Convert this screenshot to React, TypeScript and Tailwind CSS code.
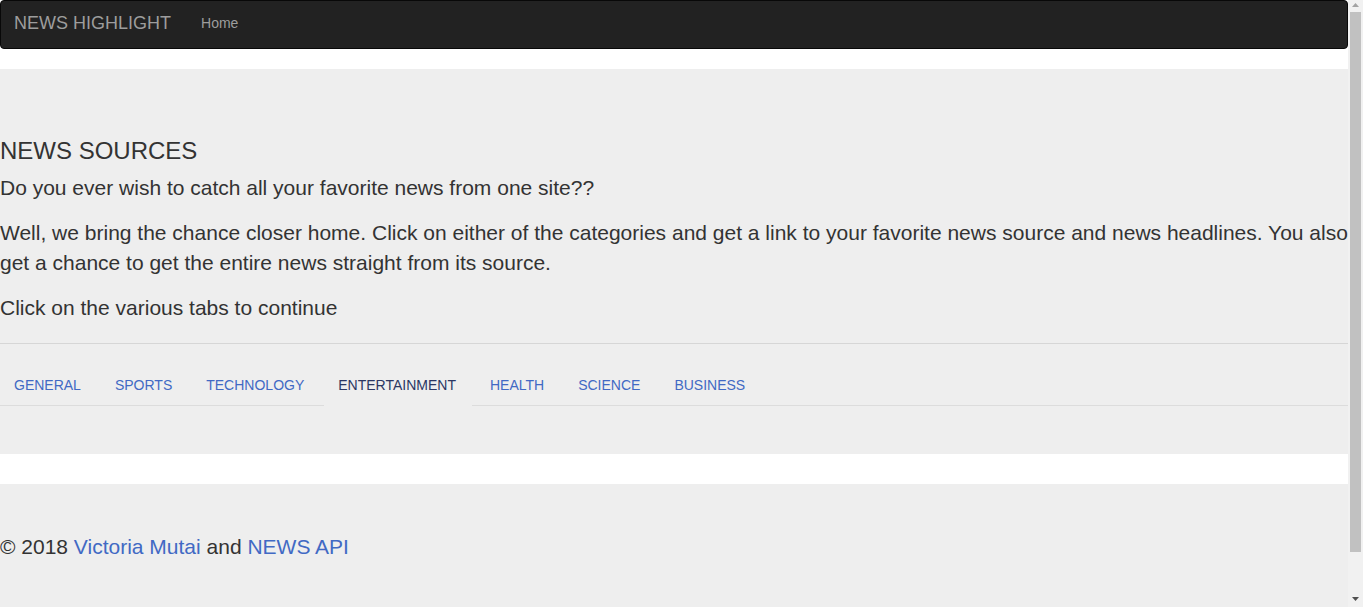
import React from "react";

const tabs = ["GENERAL", "SPORTS", "TECHNOLOGY", "ENTERTAINMENT", "HEALTH", "SCIENCE", "BUSINESS"];

export default function App() {
  return (
    <div className="flex h-[607px] w-[1363px] overflow-hidden bg-white font-['Liberation_Sans',_Arial,_sans-serif] text-[#333]">
      <div className="flex w-[1348px] shrink-0 flex-col">
        {/* Navbar */}
        <nav className="mb-[20px] flex h-[49px] shrink-0 items-start rounded-[4px] border border-[#080808] bg-[#222]">
          <a className="block pl-[13px] pr-[15px] pt-[12px] text-[18px] leading-[20px] text-[#9d9d9d]">NEWS HIGHLIGHT</a>
          <a className="block px-[15px] pt-[12px] text-[14px] leading-[20px] text-[#9d9d9d]">Home</a>
        </nav>

        {/* Jumbotron */}
        <section className="shrink-0 bg-[#eee] pt-[48px] pb-[48px]">
          <h3 className="mt-[21px] text-[24px] leading-[26px]">NEWS SOURCES</h3>
          <p className="mt-[9px] text-[21px] leading-[30px]">Do you ever wish to catch all your favorite news from one site??</p>
          <p className="mt-[15px] text-[21px] leading-[30px]">
            Well, we bring the chance closer home. Click on either of the categories and get a link to your favorite news source and news headlines. You also get a chance to get the entire news straight from its source.
          </p>
          <p className="mt-[15px] text-[21px] leading-[30px]">Click on the various tabs to continue</p>
          <hr className="mt-[20px] mb-[20px] border-0 border-t border-t-[#d6d6d6]" />
          <ul className="flex gap-[4px] border-b border-b-[#dcdcdc]">
            {tabs.map((t) => {
              const active = t === "ENTERTAINMENT";
              return (
                <li key={t} className="-mb-px">
                  <a
                    className={
                      active
                        ? "block border-y border-y-transparent border-b-[#eee] pl-[14px] pr-[16px] py-[10px] text-[14px] leading-[20px] text-[#2b3763]"
                        : "block border-y border-y-transparent pl-[14px] pr-[16px] py-[10px] text-[14px] leading-[20px] text-[#4169c4]"
                    }
                  >
                    {t}
                  </a>
                </li>
              );
            })}
          </ul>
        </section>

        <div className="h-[30px] shrink-0" />

        {/* Footer */}
        <footer className="shrink-0 bg-[#eee] pt-[48px] pb-[48px]">
          <p className="text-[21px] leading-[30px]">
            © 2018 <a className="text-[#4169c4]">Victoria Mutai</a> and <a className="text-[#4169c4]">NEWS API</a>
          </p>
        </footer>
      </div>

      {/* Scrollbar */}
      <div className="flex w-[15px] shrink-0 flex-col items-center bg-[#f1f1f1]">
        <svg width="7" height="4" viewBox="0 0 7 4" className="mt-[3px] shrink-0">
          <polygon points="3.5,0 7,4 0,4" fill="#a3a3a3" />
        </svg>
        <div className="mt-[5px] h-[540px] w-[11px] shrink-0 bg-[#c1c1c1]" />
        <div className="flex-1" />
        <svg width="7" height="4" viewBox="0 0 7 4" className="mb-[6px] shrink-0">
          <polygon points="0,0 7,0 3.5,4" fill="#505050" />
        </svg>
      </div>
    </div>
  );
}
